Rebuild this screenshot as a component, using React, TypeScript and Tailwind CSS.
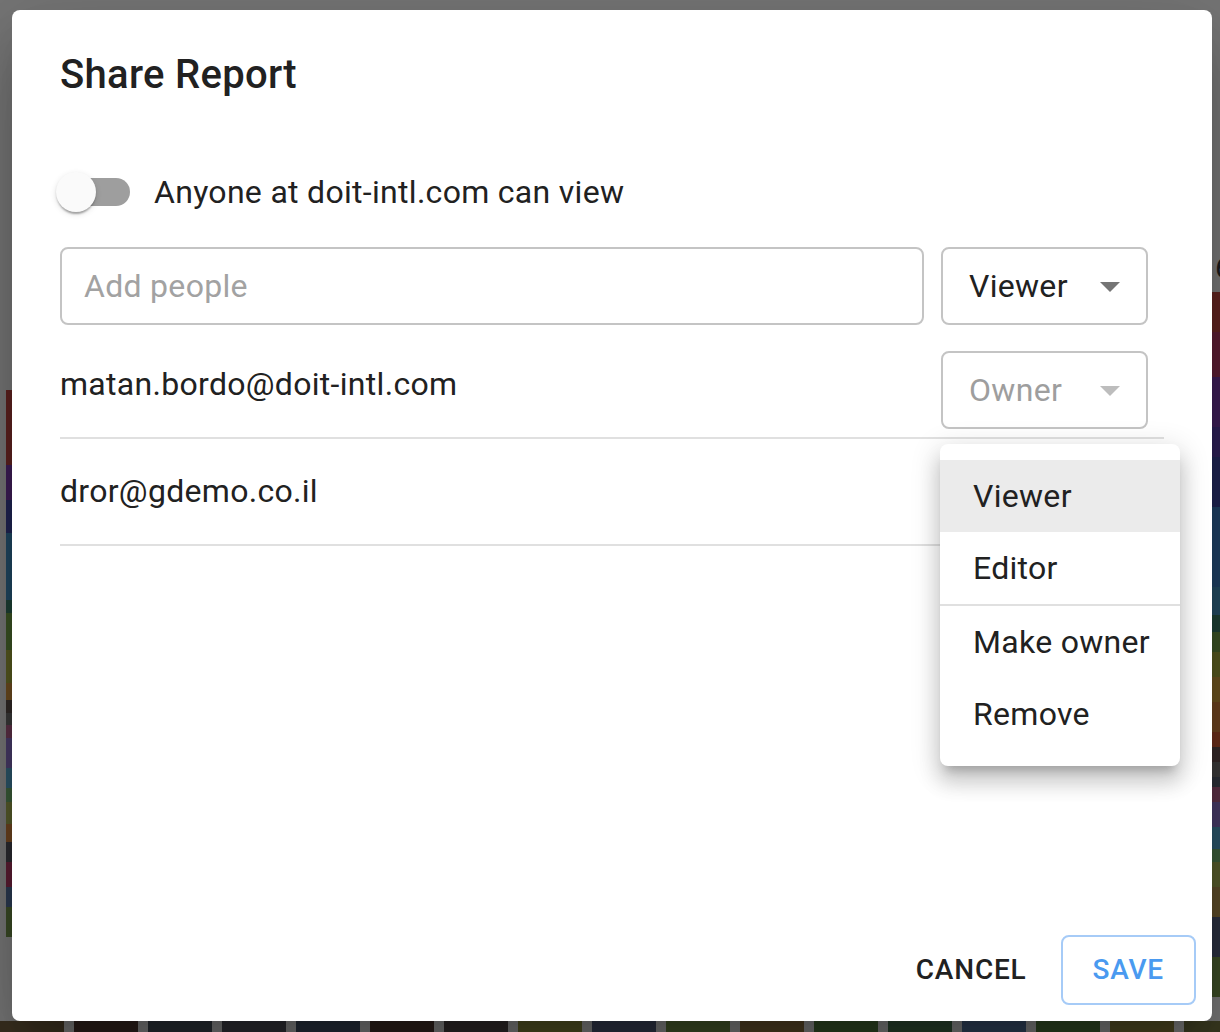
// dimmed page behind the dialog: chart bars peeking out at the edges
const leftStripes: [number, string][] = [
  [75, '#5c2220'],
  [35, '#3d1d55'],
  [33, '#1f2452'],
  [67, '#1f4660'],
  [13, '#1e4034'],
  [37, '#3b5224'],
  [33, '#55581f'],
  [17, '#6a4a20'],
  [13, '#302826'],
  [12, '#383838'],
  [13, '#5a3045'],
  [30, '#463a66'],
  [20, '#2b5468'],
  [14, '#3a5a38'],
  [22, '#555a2a'],
  [18, '#6a4220'],
  [20, '#2a2a30'],
  [25, '#5a1d33'],
  [20, '#2a3a50'],
  [30, '#3a4a25'],
]

const rightStripes: [number, string][] = [
  [40, '#5f2320'],
  [45, '#5a1d33'],
  [50, '#3d1d55'],
  [30, '#2d1f55'],
  [50, '#1f2452'],
  [80, '#1f4062'],
  [28, '#234a60'],
  [17, '#1e4034'],
  [20, '#3b5224'],
  [25, '#55581f'],
  [25, '#6a5220'],
  [30, '#6a4220'],
  [15, '#6a2e1a'],
  [15, '#342828'],
  [15, '#3a3a3a'],
  [10, '#2b3038'],
  [15, '#5a3045'],
  [25, '#463a66'],
  [22, '#2b5468'],
  [13, '#3a5a38'],
  [25, '#555a2a'],
  [30, '#5a4a28'],
  [40, '#2a3040'],
  [40, '#3a4a25'],
]

const bottomBlocks = [
  '#3a3020', '#2a1e1a', '#262a30', '#2a2a30', '#232a35', '#2a1e1a', '#2a2626', '#4a4a20',
  '#2a3040', '#3a4a25', '#4a3a20', '#2a4020', '#253a28', '#2a3a50', '#2a4020', '#4a4420', '#3a3a20',
]

function Switch() {
  return (
    <span className="relative w-[116px] h-[76px] shrink-0">
      <span className="absolute left-[24px] top-[24px] w-[68px] h-[28px] rounded-full bg-[#9e9e9e]" />
      <span className="absolute left-[18px] top-[18px] w-[40px] h-[40px] rounded-full bg-[#fafafa] shadow-[0_4px_2px_-2px_rgba(0,0,0,0.2),0_2px_2px_0_rgba(0,0,0,0.14),0_2px_6px_0_rgba(0,0,0,0.12)]" />
    </span>
  )
}

function RoleSelect({ value, disabled }: { value: string; disabled?: boolean }) {
  return (
    <div className="relative w-[207px] h-[78px] shrink-0 border-2 border-[#c4c4c4] rounded-[8px] flex items-center pl-[26px]">
      <span className={disabled ? 'text-[#9e9e9e]' : 'text-[#212121]'}>{value}</span>
      <svg
        viewBox="0 0 24 24"
        className="absolute right-[12px] top-[13px] w-[48px] h-[48px]"
        fill={disabled ? '#bdbdbd' : '#757575'}
      >
        <path d="M7 10l5 5 5-5z" />
      </svg>
    </div>
  )
}

function MenuItem({ label, selected }: { label: string; selected?: boolean }) {
  return (
    <div className={`h-[72px] flex items-center pl-[33px] pr-[8px] whitespace-nowrap ${selected ? 'bg-[#ebebeb]' : ''}`}>
      {label}
    </div>
  )
}

export default function App() {
  return (
    <div className="relative w-[1220px] h-[1032px] overflow-hidden bg-[#767676] font-['Roboto',sans-serif] text-[32px] leading-[48px] tracking-[0.3px] text-[#212121]">
      {/* backdrop */}
      <div className="flex h-[1021px]">
        <div className="w-[12px] flex flex-col pl-[6px]">
          <div className="h-[390px]" />
          {leftStripes.map(([h, c], i) => (
            <div key={i} className="w-[6px]" style={{ height: h, backgroundColor: c }} />
          ))}
        </div>
        <div className="flex-1" />
        <div className="w-[8px] flex flex-col">
          <div className="h-[292px] relative">
            <span className="absolute left-[3px] top-[253px] text-[30px] leading-[30px] text-[#1a1a1a]">6</span>
          </div>
          {rightStripes.map(([h, c], i) => (
            <div key={i} className="w-[8px]" style={{ height: h, backgroundColor: c }} />
          ))}
        </div>
      </div>
      <div className="flex h-[11px] gap-[10px]">
        {bottomBlocks.map((c, i) => (
          <div key={i} className="w-[64px] shrink-0" style={{ backgroundColor: c }} />
        ))}
      </div>

      {/* dialog */}
      <div className="absolute left-[12px] top-[10px] w-[1200px] h-[1011px] bg-white rounded-[8px] flex flex-col shadow-[0_22px_30px_-14px_rgba(0,0,0,0.2),0_48px_76px_6px_rgba(0,0,0,0.14),0_18px_92px_16px_rgba(0,0,0,0.12)]">
        <h2 className="px-[48px] pt-[33px] text-[40px] leading-[64px] font-medium tracking-[0.3px]">Share Report</h2>

        <div className="px-[48px] flex flex-col">
          <label className="flex items-center mt-[47px] -ml-[22px] h-[76px]">
            <Switch />
            <span>Anyone at doit-intl.com can view</span>
          </label>

          <div className="flex gap-[17px] mt-[17px] pr-[16px]">
            <div className="flex-1 h-[78px] border-2 border-[#c4c4c4] rounded-[8px] flex items-center px-[22px] text-[#a2a2a2]">
              Add people
            </div>
            <RoleSelect value="Viewer" />
          </div>

          <div className="flex items-start justify-between pt-[26px] pb-[8px] pr-[16px] border-b-2 border-[#e0e0e0]">
            <span className="mt-[9px]">matan.bordo@doit-intl.com</span>
            <RoleSelect value="Owner" disabled />
          </div>

          {/* this row's role select sits under the open menu */}
          <div className="flex items-start justify-between pt-[18px] pb-[9px] pr-[16px] border-b-2 border-[#e0e0e0]">
            <span className="mt-[10px]">dror@gdemo.co.il</span>
            <div className="w-[207px] h-[78px] shrink-0" />
          </div>
        </div>

        <div className="mt-auto flex justify-end items-center gap-[18px] p-[16px]">
          <button className="h-[70px] px-[16px] text-[28px] leading-[40px] font-medium tracking-[0.8px] text-[#212121]">
            CANCEL
          </button>
          <button className="h-[70px] px-[30px] border-2 border-[#a6cbf7] rounded-[8px] text-[28px] leading-[40px] font-medium tracking-[0.8px] text-[#4a9af0]">
            SAVE
          </button>
        </div>
      </div>

      {/* role menu */}
      <div className="absolute left-[940px] top-[444px] w-[240px] bg-white rounded-[8px] py-[16px] shadow-[0_10px_10px_-6px_rgba(0,0,0,0.2),0_16px_20px_2px_rgba(0,0,0,0.14),0_6px_28px_4px_rgba(0,0,0,0.12)]">
        <MenuItem label="Viewer" selected />
        <MenuItem label="Editor" />
        <div className="h-[2px] bg-[#e0e0e0]" />
        <MenuItem label="Make owner" />
        <MenuItem label="Remove" />
      </div>
    </div>
  )
}
